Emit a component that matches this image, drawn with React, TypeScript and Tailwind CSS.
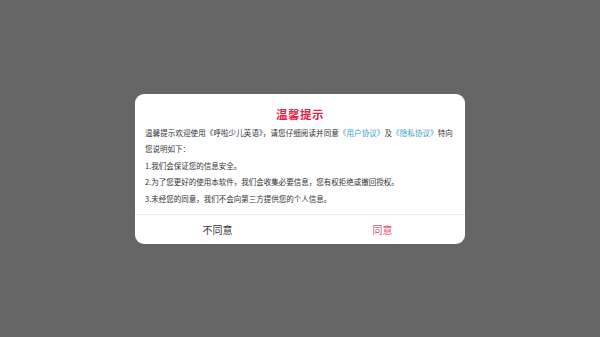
import React from 'react';

const App: React.FC = () => {
  return (
    <div className="w-[600px] h-[337px] bg-[#666666] flex items-center justify-center font-['Noto_Sans_CJK_SC',sans-serif]">
      <div className="w-[330px] bg-white rounded-[9px] overflow-hidden flex flex-col mt-[1px]">
        {/* Content */}
        <div className="px-[10px] pt-[12px] pb-[7px]">
          <h3 className="text-center text-[11.5px] font-bold leading-[16px] text-[#e3244a] tracking-[0.5px]">温馨提示</h3>
          <div className="text-[7.5px] leading-[16.5px] text-[#333333] mt-[3px]">
            <p>
              <span className="whitespace-nowrap tracking-[0.1px]">
                温馨提示欢迎使用《呼啦少儿英语》，请您仔细阅读并同意<span className="text-[#3b9dc4]">《用户协议》</span>及<span className="text-[#3b9dc4]">《隐私协议》</span>特向
              </span>
              <br />
              您说明如下：
            </p>
            <p>1.我们会保证您的信息安全。</p>
            <p>2.为了您更好的使用本软件，我们会收集必要信息，您有权拒绝或撤回授权。</p>
            <p>3.未经您的同意，我们不会向第三方提供您的个人信息。</p>
          </div>
        </div>

        {/* Actions */}
        <div className="flex border-t border-[#eeeeee] h-[30px]">
          <button className="flex-1 text-[10px] text-[#333333]">不同意</button>
          <button className="flex-1 text-[10px] text-[#e94e6c]">同意</button>
        </div>
      </div>
    </div>
  );
};

export default App;
